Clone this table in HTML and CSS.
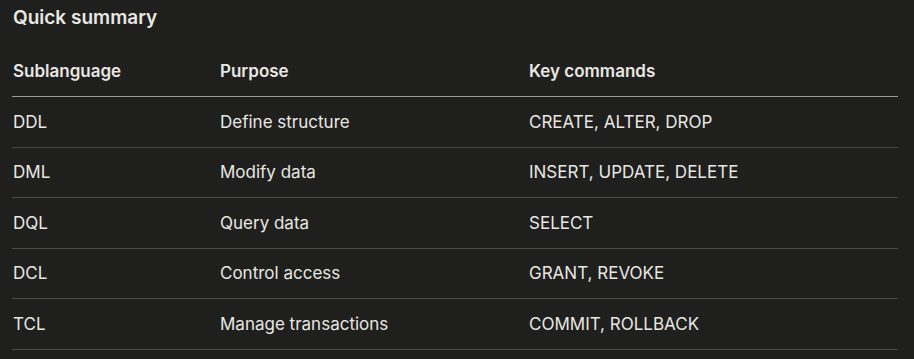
FILE: index.html
```html
<!DOCTYPE html>
<html lang="en">
<head>
  <meta charset="UTF-8">
  <meta name="viewport" content="width=device-width, initial-scale=1.0">
  <title>Quick summary</title>
  <link rel="stylesheet" href="styles.css">
</head>
<body>
  <h2 class="title">Quick summary</h2>
  <table class="summary">
    <thead>
      <tr>
        <th class="col-lang">Sublanguage</th>
        <th class="col-purpose">Purpose</th>
        <th>Key commands</th>
      </tr>
    </thead>
    <tbody>
      <tr><td>DDL</td><td>Define structure</td><td>CREATE, ALTER, DROP</td></tr>
      <tr><td>DML</td><td>Modify data</td><td>INSERT, UPDATE, DELETE</td></tr>
      <tr><td>DQL</td><td>Query data</td><td>SELECT</td></tr>
      <tr><td>DCL</td><td>Control access</td><td>GRANT, REVOKE</td></tr>
      <tr><td>TCL</td><td>Manage transactions</td><td>COMMIT, ROLLBACK</td></tr>
    </tbody>
  </table>
</body>
</html>
```

FILE: styles.css
```css
* { margin:0; padding:0; box-sizing:border-box; }

:root {
  --color-bg: #1f1f1e;
  --color-text: #e8e7e2;
  --color-line-head: #9c9b97;
  --color-line: #4a4946;
  --font-size: 17px;
}

body {
  background-color: var(--color-bg);
  color: var(--color-text);
  font-family: "Inter", "Liberation Sans", sans-serif;
  padding: 5px 16px 0 12px;
}

.title {
  font-size: 19px;
  font-weight: 600;
  line-height: 26px;
  padding-left: 1px;
}

.summary {
  width: 100%;
  border-collapse: collapse;
  margin-top: 15px;
  font-size: var(--font-size);
}

.summary th,
.summary td {
  text-align: left;
  height: 50.5px;
  padding: 0 0 0 1px;
  vertical-align: middle;
  white-space: nowrap;
}

.summary th {
  font-weight: 600;
  border-bottom: 1px solid var(--color-line-head);
}

.summary td {
  font-weight: 400;
  border-bottom: 1px solid var(--color-line);
}

.col-lang { width: 207px; }
.col-purpose { width: 309px; }
```
